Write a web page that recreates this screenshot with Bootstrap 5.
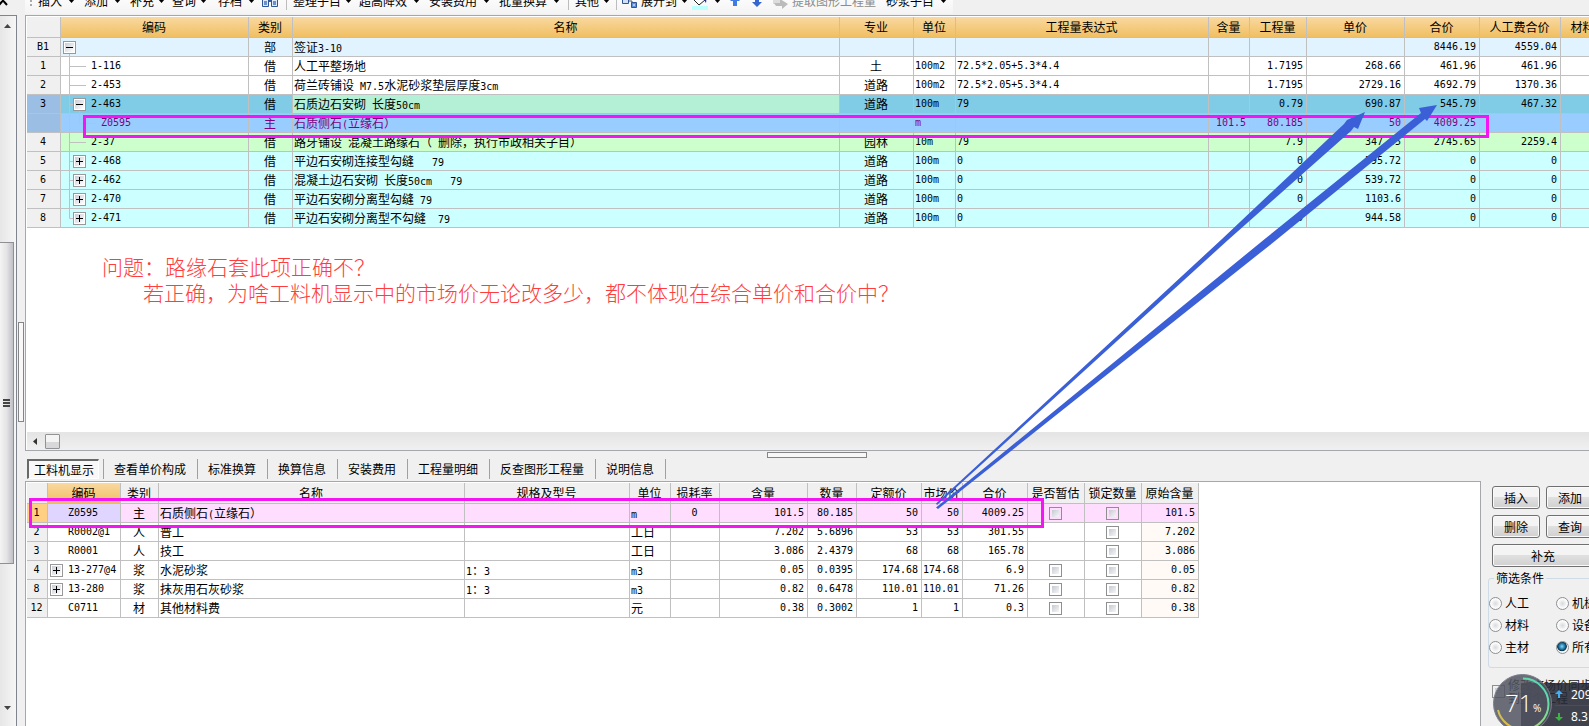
<!DOCTYPE html>
<html lang="zh-CN">
<head>
<meta charset="utf-8">
<meta name="viewport" content="width=device-width, initial-scale=1">
<title>工料机显示</title>
<link href="https://cdn.jsdelivr.net/npm/bootstrap@5.3.0/dist/css/bootstrap.min.css" rel="stylesheet">
<style>
:root{--line:#c0c0c0;--edge:#a5a7ac}
body{background:#f0f0f0;color:#000;font:12px/18px "Noto Sans CJK SC","Liberation Sans",sans-serif}
button{font:inherit;color:inherit}
.n{font-family:"DejaVu Sans Mono",monospace;font-size:10px;line-height:1;font-style:normal;white-space:pre}

/* left strip */
.strip{width:25px;flex:none}
.strip-cap{height:15px;overflow:hidden}
.strip-cap svg{display:block}
.vbar{width:17px;border:1px solid #7f848f;border-left:0;border-bottom:0;background:linear-gradient(90deg,#e6e6e6,#f6f6f6)}
.vthumb{height:322px;margin-top:206px;width:14px;border:1px solid #8f9095;border-left:0;background:linear-gradient(90deg,#f4f4f4,#e4e4e6 50%,#bfc0c6)}
.vgrab{width:6px;height:100px;border:1px solid #858585;background:#f8f8f8;left:18px;top:322px}

/* toolbar */
.tools{height:15px}
.tools-in{width:928px;height:22px;margin-top:-8px;background:linear-gradient(#fff,#f4f4f4);padding-left:2px;
 grid-template-columns:11px 46px 46px 42px 46px 44px 24px 7px 66px 70px 70px 69px 7px 41px 6px 70px 38px 22px 20px 114px 67px;align-items:start}
.tools button{border:0;background:none;padding:0;height:18px;display:flex;align-items:center;gap:6px;white-space:nowrap;text-align:left}
.tools button.snug{gap:4px}
.tools .vsep{width:1px;height:18px;background:#bdbdbd}
.tools svg{flex:none}
.tools .off{color:#8c8c8c}

/* grids */
.pane{background:#fff;border:1px solid var(--edge);border-right:0;padding:1px 0 0 1px;overflow:hidden}
.upper{height:436px;flex:none}
.sheet{table-layout:fixed;border-collapse:separate;border-spacing:0;margin:0}
.sheet th,.sheet td{height:19px;padding:0 2px 0 1px;border-right:1px solid var(--line);border-bottom:1px solid var(--line);line-height:16px;white-space:nowrap;overflow:hidden;font-weight:400;vertical-align:middle}
.sheet thead th{height:21px;text-align:center;line-height:20px}
.sheet tbody th{background:#f0f0f0;text-align:center}
.sheet tbody th,.g1 td:nth-child(2),.g1 td:nth-child(n+6),.g2 td:nth-child(2),.g2 td:nth-child(n+7){font-family:"DejaVu Sans Mono",monospace;font-size:10px}
.g1{width:1615px}
.g1 thead th{background:linear-gradient(#f9d9a1,#f0bf61)}
.g1 thead th:first-child{background:#f0f0f0}
.g1 td:nth-child(3),.g1 td:nth-child(5),.g2 td:nth-child(3),.g2 td:nth-child(7){text-align:center}
.g1 td:nth-child(n+8),.g2 td:nth-child(n+8){text-align:right;padding-right:3px}
.g1 td:nth-child(2),.g2 td:nth-child(2){padding:0}
.tree{display:flex;align-items:center;height:18px}
.tree svg{display:block;flex:none;overflow:visible}
.r-part td{background:#e1f3ff}
.r-cur td{background:#80cbe6}.r-cur td:nth-child(4){background:#b4f0d6}
.sheet .r-cur th,.sheet .r-main th{background:#9bbfe4}
.r-main td{background:#9cf;color:#800080}
.r-green td{background:#cfc}
.r-cyan td{background:#cff}
.g2{width:1171px}
.g2 thead th{background:#f0f0f0}
.g2 thead th:nth-child(2){background:linear-gradient(#f9d9a1,#f0bf61)}
.g2 td:last-child{background:#fffaf5}
.g2 .tree{padding-left:2px}
.sheet .r-pick th{background:#ffd083}
.g2 .r-pick td{background:#fdf}.g2 .r-pick td:nth-child(2){background:#dfd5ff}
.cb{appearance:none;width:13px;height:13px;display:block;margin:0 auto;border:1px solid #8e8f8f;background:linear-gradient(135deg,#c5cad2,#f6f6f6) content-box #fff;padding:2px}
.note{color:#ff3d3d;font-size:21px;line-height:26px;padding:25px 0 0 75px;font-weight:300}
.note p{margin:0}.note p+p{padding-left:41px}
.hbar{height:18px;background:linear-gradient(#e4e4e4,#f0f0f0)}
.hthumb{width:15px;height:15px;border:1px solid #929292;background:linear-gradient(#f4f4f4 50%,#d8d8da 50%);border-radius:1px}

/* tabs */
.tabrow{height:30px;flex:none;padding:8px 0 0 2px}
.tabrow button{border:0;background:none;padding:0 11px 0 10px;height:20px;line-height:20px;border-right:1px solid #a0a0a0;white-space:nowrap}
.tabrow button.on{padding:0 5px;border:1px solid #fff;border-top:2px solid #696969;border-left:2px solid #696969;background:#f8f8f8;width:72px;line-height:18px}
.tabgap{width:5px;height:20px;border-right:1px solid #a0a0a0}
.hgrab{width:100px;height:6px;border:1px solid #858585;background:#f8f8f8;left:742px;top:1px}

/* right panel */
.side{width:108px;flex:none;padding:5px 0 0 11px;overflow:hidden}
.lower{border-right:1px solid var(--edge);border-bottom:0}
.side-in{width:102px}
.btn-w{height:23px;border:1px solid #707070;border-radius:3px;background:linear-gradient(#f4f4f4 45%,#e0e0e0 50%,#d0d0d0);box-shadow:inset 0 0 0 1px #fafafa;line-height:20px;padding:0}
.pair{margin-bottom:6px}
.pair .btn-w{width:48px}
.filt{width:116px;height:98px;margin:3px 0 0 -4px;border:1px solid #cfdbe6;border-radius:3px;padding:6px 0 0}
.filt legend{float:none;width:auto;margin:0 0 0 5px;padding:0 2px;font-size:12px;line-height:16px}
.filt .opt{width:67px;height:22px;white-space:nowrap;gap:3px}
.rd{appearance:none;width:13px;height:13px;border:1px solid #8e8f8f;border-radius:50%;margin:0;background:radial-gradient(#d8dade,#fafafa 55%,#fff);flex:none}
.rd:checked{background:radial-gradient(circle at 45% 40%,#7fd8f8 0,#1a6f9c 35%,#0c2f4a 50%,#f4f4f4 58%)}
.sync{margin-top:10px;width:102px;font-size:12px;line-height:13px;color:#222;gap:3px}
.sync .cb{margin:0}
.meter{right:0;bottom:0;width:96px;height:52px;overflow:hidden}
.rates{left:28px;top:9px;right:0;bottom:0;background:rgba(38,41,52,.88);color:#fff;font:12px/21px "Noto Sans",sans-serif;padding-left:34px}
.rates div{height:22px;gap:8px;white-space:nowrap}
.rates div+div{border-top:1px solid #4b4e5a}
.dial{left:0;top:0}

/* annotations drawn over the window */
.mark-box{border:3px solid #f316f3;pointer-events:none}
.arrows{left:0;top:0;pointer-events:none}
</style>
</head>
<body>
<svg width="0" height="0" class="position-absolute" aria-hidden="true">
 <defs>
  <linearGradient id="bx" x1="0" y1="0" x2="1" y2="1"><stop offset="0" stop-color="#c9cdd6"/><stop offset="1" stop-color="#fff"/></linearGradient>
  <symbol id="box" viewBox="0 0 13 13"><rect x=".5" y=".5" width="12" height="12" fill="#fff" stroke="#999"/><rect x="2" y="2" width="9" height="9" fill="url(#bx)"/></symbol>
  <g id="t-minus"><use href="#box" width="13" height="13"/><path d="M3 6.500h7" stroke="#000"/></g>
  <g id="t-plus"><use href="#box" width="13" height="13"/><path d="M3 6.500h7M6.500 3v7" stroke="#000"/></g>
  <g id="t-leaf"><path d="M8.500 0v19M8 9.500h17" stroke="#c0c0c0" fill="none"/></g>
  <g id="t-node"><path d="M8.500 0v19M8 9.500h4" stroke="#c0c0c0" fill="none"/><use href="#t-plus" x="12" y="3"/></g>
  <path id="caret" d="M0 0h7L3.500 4z"/>
 </defs>
</svg>
<div class="d-flex vh-100 overflow-hidden position-relative">

 <aside class="strip d-flex flex-column">
  <div class="strip-cap"><svg width="10" height="7" viewBox="0 0 10 7"><path d="M0-3l7 8M6-3L-1 5" stroke="#000" stroke-width="2"/></svg></div>
  <div class="vbar flex-grow-1 d-flex flex-column">
   <svg width="14" height="20" class="flex-shrink-0"><path d="M4 12h7L7.500 8z" fill="#444"/></svg>
   <div class="vthumb flex-shrink-0 d-flex align-items-center"><svg width="12" height="9"><path d="M3 1h7M3 4h7M3 7h7" stroke="#444" stroke-width="2"/></svg></div>
   <svg width="14" height="30" class="mt-auto flex-shrink-0"><path d="M4 10h7l-3.500 4z" fill="#444"/></svg>
  </div>
  <div class="vgrab position-absolute"></div>
 </aside>

 <main class="flex-grow-1 d-flex flex-column" style="min-width:0">
  <div class="tools overflow-hidden flex-shrink-0">
   <div class="tools-in d-grid">
    <svg width="6" height="18"><path d="M3 8h2v2H3zM3 12h2v2H3z" fill="#aaa"/></svg>
    <button type="button">插入<svg width="7" height="4"><use href="#caret"/></svg></button>
    <button type="button">添加<svg width="7" height="4"><use href="#caret"/></svg></button>
    <button type="button" class="snug">补充<svg width="7" height="4"><use href="#caret"/></svg></button>
    <button type="button" class="snug">查询<svg width="7" height="4"><use href="#caret"/></svg></button>
    <button type="button">存档<svg width="7" height="4"><use href="#caret"/></svg></button>
    <button type="button" aria-label="查找"><svg width="16" height="16"><path d="M2 3h4v4H2zM10 3h4v4h-4zM6 6h4v3H6z" fill="#3b5f9e"/><path d="M.500 6.500h6v7h-6zM9.500 6.500h6v7h-6z" fill="#dfeaf8" stroke="#2f5597"/><path d="M3.500 8v4M12.500 8v4" stroke="#6b8fcb" stroke-width="3"/></svg></button>
    <span class="vsep"></span>
    <button type="button" class="snug">整理子目<svg width="7" height="4"><use href="#caret"/></svg></button>
    <button type="button">超高降效<svg width="7" height="4"><use href="#caret"/></svg></button>
    <button type="button">安装费用<svg width="7" height="4"><use href="#caret"/></svg></button>
    <button type="button">批量换算<svg width="7" height="4"><use href="#caret"/></svg></button>
    <span class="vsep"></span>
    <button type="button" class="snug">其他<svg width="7" height="4"><use href="#caret"/></svg></button>
    <span class="vsep"></span>
    <button type="button" class="snug"><svg width="15" height="16"><path d="M.500 4.500h6v6h-6z" fill="#cfe0f8" stroke="#2f5597"/><path d="M7 8h3v5" stroke="#555" fill="none"/><path d="M9.500 9.500h5v5h-5z" fill="#5b8edb" stroke="#2f5597"/><path d="M11 12h2" stroke="#fff"/></svg>展开到<svg width="7" height="4"><use href="#caret"/></svg></button>
    <button type="button" aria-label="填充颜色"><svg width="16" height="18"><path d="M2 8l6-5 5 5-6 5z" fill="#fff" stroke="#222"/><path d="M12 4q3 2 2 7l-2-3z" fill="#1e2f9a"/><path d="M0 14h16v4H0z" fill="#bff"/></svg><svg width="7" height="4"><use href="#caret"/></svg></button>
    <button type="button" aria-label="上移"><svg width="10" height="16"><path d="M3 13V8H0l5-5 5 5H7v5z" fill="#3f7be0"/></svg></button>
    <button type="button" aria-label="下移"><svg width="10" height="16"><path d="M3 3v6H0l5 5 5-5H7V3z" fill="#3566cf"/></svg></button>
    <button type="button" class="snug off"><svg width="16" height="16"><path d="M1 3h8v8H1z" fill="#ddd"/><path d="M2 10h6V6l8 5-6 5v-3H4z" fill="#bbb"/></svg>提取图形工程量</button>
    <button type="button">砂浆子目<svg width="7" height="4"><use href="#caret"/></svg></button>
   </div>
  </div>

  <section class="pane upper d-flex flex-column">
   <table class="sheet g1 flex-shrink-0">
    <colgroup><col style="width:34px"><col style="width:188px"><col style="width:44px"><col style="width:547px"><col style="width:74px"><col style="width:42px"><col style="width:253px"><col style="width:41px"><col style="width:57px"><col style="width:98px"><col style="width:75px"><col style="width:81px"><col style="width:81px"></colgroup>
    <thead><tr><th></th><th>编码</th><th>类别</th><th>名称</th><th>专业</th><th>单位</th><th>工程量表达式</th><th>含量</th><th>工程量</th><th>单价</th><th>合价</th><th>人工费合价</th><th>材料费合价</th></tr></thead>
    <tbody>
    <tr class="r-part"><th>B1</th><td><div class="tree"><svg width="30" height="18"><path d="M8.500 15v4" stroke="#c0c0c0"/><use href="#t-minus" x="2" y="3"/></svg></div></td><td>部</td><td>签证<i class="n">3-10</i></td><td></td><td></td><td></td><td></td><td></td><td></td><td>8446.19</td><td>4559.04</td><td></td></tr>
    <tr><th>1</th><td><div class="tree"><svg width="30" height="18"><use href="#t-leaf"/></svg>1-116</div></td><td>借</td><td>人工平整场地</td><td>土</td><td>100m2</td><td>72.5*2.05+5.3*4.4</td><td></td><td>1.7195</td><td>268.66</td><td>461.96</td><td>461.96</td><td></td></tr>
    <tr><th>2</th><td><div class="tree"><svg width="30" height="18"><use href="#t-leaf"/></svg>2-453</div></td><td>借</td><td>荷兰砖铺设<i class="n"> M7.5</i>水泥砂浆垫层厚度<i class="n">3cm</i></td><td>道路</td><td>100m2</td><td>72.5*2.05+5.3*4.4</td><td></td><td>1.7195</td><td>2729.16</td><td>4692.79</td><td>1370.36</td><td></td></tr>
    <tr class="r-cur"><th>3</th><td><div class="tree"><svg width="30" height="18"><path d="M8.500 0v19M8 9.500h4M18.500 15v4" stroke="#c0c0c0"/><use href="#t-minus" x="12" y="3"/></svg>2-463</div></td><td>借</td><td>石质边石安砌<i class="n"> </i>长度<i class="n">50cm</i></td><td>道路</td><td>100m</td><td>79</td><td></td><td>0.79</td><td>690.87</td><td>545.79</td><td>467.32</td><td></td></tr>
    <tr class="r-main"><th></th><td><div class="tree"><svg width="40" height="18"><path d="M8.500 0v19M18.500 0v9.500H35" stroke="#c0c0c0" fill="none"/></svg>Z0595</div></td><td>主</td><td>石质侧石<i class="n">(</i>立缘石）</td><td></td><td>m</td><td></td><td>101.5</td><td>80.185</td><td>50</td><td>4009.25</td><td></td><td></td></tr>
    <tr class="r-green"><th>4</th><td><div class="tree"><svg width="30" height="18"><use href="#t-leaf"/></svg>2-37</div></td><td>借</td><td>路牙铺设<i class="n"> </i>混凝土路缘石（<i class="n"> </i>删除，执行市政相关子目）</td><td>园林</td><td>10m</td><td>79</td><td></td><td>7.9</td><td>347.55</td><td>2745.65</td><td>2259.4</td><td></td></tr>
    <tr class="r-cyan"><th>5</th><td><div class="tree"><svg width="30" height="18"><use href="#t-node"/></svg>2-468</div></td><td>借</td><td>平边石安砌连接型勾缝<i class="n">   79</i></td><td>道路</td><td>100m</td><td>0</td><td></td><td>0</td><td>595.72</td><td>0</td><td>0</td><td></td></tr>
    <tr class="r-cyan"><th>6</th><td><div class="tree"><svg width="30" height="18"><use href="#t-node"/></svg>2-462</div></td><td>借</td><td>混凝土边石安砌<i class="n"> </i>长度<i class="n">50cm   79</i></td><td>道路</td><td>100m</td><td>0</td><td></td><td>0</td><td>539.72</td><td>0</td><td>0</td><td></td></tr>
    <tr class="r-cyan"><th>7</th><td><div class="tree"><svg width="30" height="18"><use href="#t-node"/></svg>2-470</div></td><td>借</td><td>平边石安砌分离型勾缝<i class="n"> 79</i></td><td>道路</td><td>100m</td><td>0</td><td></td><td>0</td><td>1103.6</td><td>0</td><td>0</td><td></td></tr>
    <tr class="r-cyan"><th>8</th><td><div class="tree"><svg width="30" height="18"><path d="M8.500 0v9.500H12" stroke="#c0c0c0" fill="none"/><use href="#t-plus" x="12" y="3"/></svg>2-471</div></td><td>借</td><td>平边石安砌分离型不勾缝<i class="n">  79</i></td><td>道路</td><td>100m</td><td>0</td><td></td><td>0</td><td>944.58</td><td>0</td><td>0</td><td></td></tr>
    </tbody>
   </table>
   <div class="note"><p>问题：路缘石套此项正确不？</p><p>若正确，为啥工料机显示中的市场价无论改多少，都不体现在综合单价和合价中？</p></div>
   <div class="hbar mt-auto d-flex align-items-center"><svg width="18" height="17"><path d="M10 5v7L6 8.500z" fill="#333"/></svg><div class="hthumb"></div></div>
  </section>

  <nav class="tabrow d-flex position-relative">
   <div class="hgrab position-absolute"></div>
   <button type="button" class="on">工料机显示</button><span class="tabgap"></span>
   <button type="button">查看单价构成</button><button type="button">标准换算</button><button type="button">换算信息</button><button type="button">安装费用</button><button type="button">工程量明细</button><button type="button">反查图形工程量</button><button type="button">说明信息</button>
  </nav>

  <div class="d-flex flex-grow-1" style="min-height:0">
   <section class="pane lower flex-grow-1">
    <table class="sheet g2">
     <colgroup><col style="width:21px"><col style="width:73px"><col style="width:38px"><col style="width:306px"><col style="width:165px"><col style="width:41px"><col style="width:49px"><col style="width:88px"><col style="width:49px"><col style="width:65px"><col style="width:41px"><col style="width:65px"><col style="width:57px"><col style="width:57px"><col style="width:57px"></colgroup>
     <thead><tr><th></th><th>编码</th><th>类别</th><th>名称</th><th>规格及型号</th><th>单位</th><th>损耗率</th><th>含量</th><th>数量</th><th>定额价</th><th>市场价</th><th>合价</th><th>是否暂估</th><th>锁定数量</th><th>原始含量</th></tr></thead>
     <tbody>
     <tr class="r-pick"><th>1</th><td><div class="tree"><svg width="18" height="18"></svg>Z0595</div></td><td>主</td><td>石质侧石<i class="n">(</i>立缘石）</td><td></td><td><i class="n">m</i></td><td>0</td><td>101.5</td><td>80.185</td><td>50</td><td>50</td><td>4009.25</td><td><input type="checkbox" class="cb" aria-label="是否暂估"></td><td><input type="checkbox" class="cb" aria-label="锁定数量"></td><td>101.5</td></tr>
     <tr><th>2</th><td><div class="tree"><svg width="18" height="18"></svg>R0002@1</div></td><td>人</td><td>普工</td><td></td><td>工日</td><td></td><td>7.202</td><td>5.6896</td><td>53</td><td>53</td><td>301.55</td><td></td><td><input type="checkbox" class="cb" aria-label="锁定数量"></td><td>7.202</td></tr>
     <tr><th>3</th><td><div class="tree"><svg width="18" height="18"></svg>R0001</div></td><td>人</td><td>技工</td><td></td><td>工日</td><td></td><td>3.086</td><td>2.4379</td><td>68</td><td>68</td><td>165.78</td><td></td><td><input type="checkbox" class="cb" aria-label="锁定数量"></td><td>3.086</td></tr>
     <tr><th>4</th><td><div class="tree"><svg width="18" height="18"><use href="#t-plus" y="3"/></svg>13-277@4</div></td><td>浆</td><td>水泥砂浆</td><td><i class="n">1</i>：<i class="n">3</i></td><td><i class="n">m3</i></td><td></td><td>0.05</td><td>0.0395</td><td>174.68</td><td>174.68</td><td>6.9</td><td><input type="checkbox" class="cb" aria-label="是否暂估"></td><td><input type="checkbox" class="cb" aria-label="锁定数量"></td><td>0.05</td></tr>
     <tr><th>8</th><td><div class="tree"><svg width="18" height="18"><use href="#t-plus" y="3"/></svg>13-280</div></td><td>浆</td><td>抹灰用石灰砂浆</td><td><i class="n">1</i>：<i class="n">3</i></td><td><i class="n">m3</i></td><td></td><td>0.82</td><td>0.6478</td><td>110.01</td><td>110.01</td><td>71.26</td><td><input type="checkbox" class="cb" aria-label="是否暂估"></td><td><input type="checkbox" class="cb" aria-label="锁定数量"></td><td>0.82</td></tr>
     <tr><th>12</th><td><div class="tree"><svg width="18" height="18"></svg>C0711</div></td><td>材</td><td>其他材料费</td><td></td><td>元</td><td></td><td>0.38</td><td>0.3002</td><td>1</td><td>1</td><td>0.3</td><td><input type="checkbox" class="cb" aria-label="是否暂估"></td><td><input type="checkbox" class="cb" aria-label="锁定数量"></td><td>0.38</td></tr>
     </tbody>
    </table>
   </section>

   <aside class="side">
    <div class="side-in d-flex flex-column">
     <div class="pair d-flex justify-content-between"><button type="button" class="btn-w">插入</button><button type="button" class="btn-w">添加</button></div>
     <div class="pair d-flex justify-content-between"><button type="button" class="btn-w">删除</button><button type="button" class="btn-w">查询</button></div>
     <button type="button" class="btn-w">补充</button>
     <fieldset class="filt"><legend>筛选条件</legend>
      <div class="d-flex flex-wrap" style="width:134px">
       <label class="opt d-flex align-items-center"><input type="radio" class="rd" name="kind">人工</label>
       <label class="opt d-flex align-items-center"><input type="radio" class="rd" name="kind">机械</label>
       <label class="opt d-flex align-items-center"><input type="radio" class="rd" name="kind">材料</label>
       <label class="opt d-flex align-items-center"><input type="radio" class="rd" name="kind">设备</label>
       <label class="opt d-flex align-items-center"><input type="radio" class="rd" name="kind">主材</label>
       <label class="opt d-flex align-items-center"><input type="radio" class="rd" name="kind" checked>所有</label>
      </div>
     </fieldset>
     <label class="sync d-flex align-items-center"><input type="checkbox" class="cb flex-shrink-0" checked><span>修改市场价同步到整个工程</span></label>
    </div>
   </aside>
  </div>
 </main>

 <div class="meter position-absolute">
  <div class="rates position-absolute">
   <div class="d-flex align-items-center"><svg width="8" height="8" class="flex-shrink-0"><path d="M4 0l4 4H5v4H3V4H0z" fill="#3fb0f5"/></svg>209</div>
   <div class="d-flex align-items-center"><svg width="8" height="8" class="flex-shrink-0"><path d="M4 8l4-4H5V0H3v4H0z" fill="#35b83c"/></svg>8.3</div>
  </div>
  <svg class="dial position-absolute" width="60" height="60" viewBox="0 0 60 60">
   <defs><linearGradient id="arc" x1="1" y1="0" x2="0" y2="1"><stop offset="0" stop-color="#3fd8c8"/><stop offset=".5" stop-color="#8fdc82"/><stop offset="1" stop-color="#f5b23c"/></linearGradient></defs>
   <circle cx="29.500" cy="29.500" r="29" fill="#50535f" fill-opacity=".84" stroke="#7b7e88"/>
   <path d="M30 4.500a25.500 25.500 0 0 1 0 51A25.500 25.500 0 0 1 5 36" fill="none" stroke="url(#arc)" stroke-width="2"/>
   <text x="12" y="38" fill="#fff" font-family="Open Sans, sans-serif" font-weight="300" font-size="24">71</text>
   <text x="40" y="38" fill="#fff" font-family="Open Sans, sans-serif" font-size="10">%</text>
  </svg>
 </div>

 <div class="mark-box position-absolute" style="left:83px;top:115px;width:1406px;height:23px"></div>
 <div class="mark-box position-absolute" style="left:29px;top:498px;width:1015px;height:30px"></div>
 <svg class="arrows position-absolute" width="1500" height="520" viewBox="0 0 1500 520">
  <g fill="#3a5fd6">
   <path d="M936 503.500L1222 239 1344 124 1347 120 1365 112 1358 129 1354 127 1351 131 1228 240 937 505z"/>
   <path d="M936 507.500L1266 238 1421 113 1419 108 1437 105 1427 121 1425 119 1275 241 938 509z"/>
  </g>
 </svg>
</div>
<script src="https://cdn.jsdelivr.net/npm/bootstrap@5.3.0/dist/js/bootstrap.bundle.min.js"></script>
</body>
</html>
